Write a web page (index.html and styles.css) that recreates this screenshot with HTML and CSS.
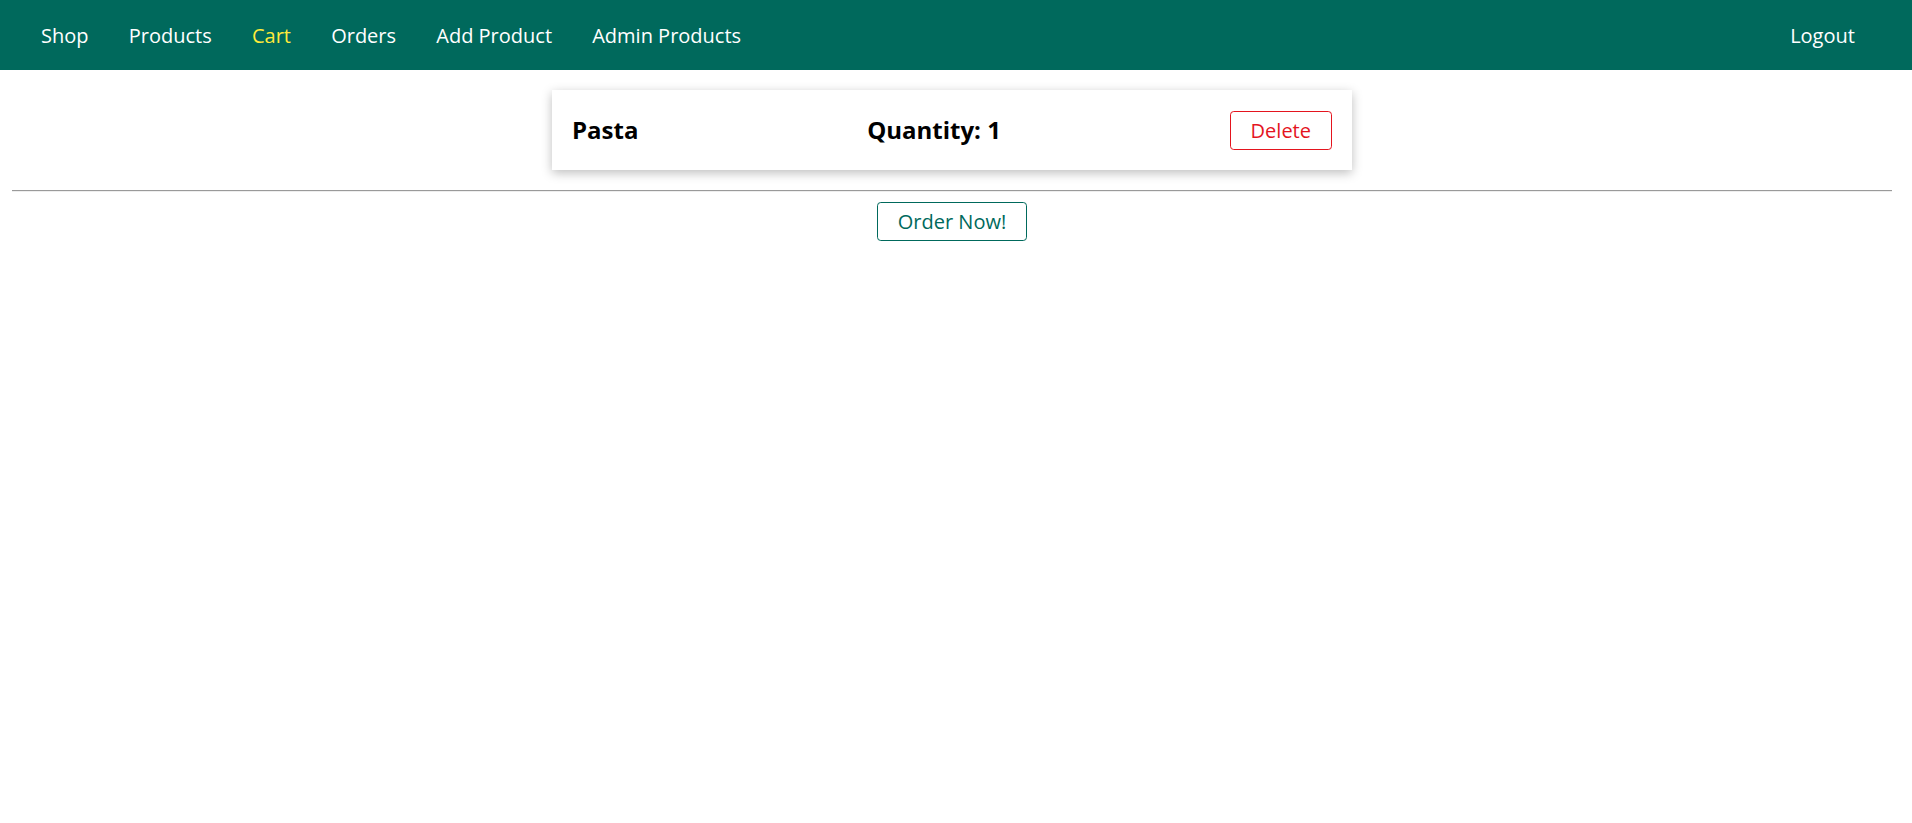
FILE: index.html
```html
<!DOCTYPE html>
<html lang="en">
<head>
<meta charset="UTF-8">
<title>Your Cart</title>
<link rel="stylesheet" href="styles.css">
</head>
<body>
<header class="main-header">
  <nav class="main-header__nav">
    <ul class="main-header__item-list">
      <li class="main-header__item"><a href="#">Shop</a></li>
      <li class="main-header__item"><a href="#">Products</a></li>
      <li class="main-header__item"><a class="active" href="#">Cart</a></li>
      <li class="main-header__item"><a href="#">Orders</a></li>
      <li class="main-header__item"><a href="#">Add Product</a></li>
      <li class="main-header__item"><a href="#">Admin Products</a></li>
    </ul>
    <ul class="main-header__item-list">
      <li class="main-header__item"><button class="logout-btn" type="button">Logout</button></li>
    </ul>
  </nav>
</header>
<main class="main">
  <ul class="cart__item-list">
    <li class="cart__item">
      <h1 class="cart__title">Pasta</h1>
      <h2 class="cart__qty">Quantity: 1</h2>
      <form class="cart__form">
        <button class="btn danger" type="button">Delete</button>
      </form>
    </li>
  </ul>
  <hr class="divider">
  <div class="centered">
    <button class="btn" type="button">Order Now!</button>
  </div>
</main>
</body>
</html>
```

FILE: styles.css
```css
* {
  box-sizing: border-box;
}

body {
  margin: 0;
  padding: 0;
  font-family: "Open Sans", "Noto Sans", sans-serif;
  background: #fff;
}

.main-header {
  width: 100%;
  height: 70px;
  background-color: #00695c;
  padding: 0 37px 0 21px;
}

.main-header__nav {
  height: 100%;
  display: flex;
  align-items: center;
  justify-content: space-between;
}

.main-header__item-list {
  list-style: none;
  margin: 0;
  padding: 0;
  display: flex;
}

.main-header__item {
  margin: 0 20.1px;
  padding: 0;
}

.main-header__item a,
.logout-btn {
  font: inherit;
  font-size: 20px;
  color: #ffffff;
  text-decoration: none;
  background: transparent;
  border: none;
  padding: 0;
  cursor: pointer;
}

.main-header__item a.active {
  color: #ffeb3b;
}

.main {
  padding: 20px 20px 0 12px;
}

.cart__item-list {
  list-style: none;
  margin: 0 auto;
  padding: 0;
  width: 800px;
}

.cart__item {
  display: flex;
  justify-content: space-between;
  align-items: center;
  padding: 20px;
  box-shadow: 0 2.5px 10px rgba(0, 0, 0, 0.26);
  margin-bottom: 20px;
  height: 80px;
}

.cart__title,
.cart__qty {
  margin: 0 0 1px 0;
  font-size: 24px;
  font-weight: 700;
  color: #000;
}

.cart__form {
  margin: 0;
}

.btn {
  font: inherit;
  font-size: 20px;
  line-height: 27px;
  border: 1px solid #00695c;
  color: #00695c;
  background: #fff;
  border-radius: 3.75px;
  cursor: pointer;
  padding: 5px 20px;
}

.btn.danger {
  color: #e4141e;
  border-color: #e4141e;
}

.divider {
  margin: 0 0 10px 0;
  border: none;
  border-top: 1px solid #9a9a9a;
  border-bottom: 1px solid #eeeeee;
  height: 0;
}

.centered {
  text-align: center;
}
```
